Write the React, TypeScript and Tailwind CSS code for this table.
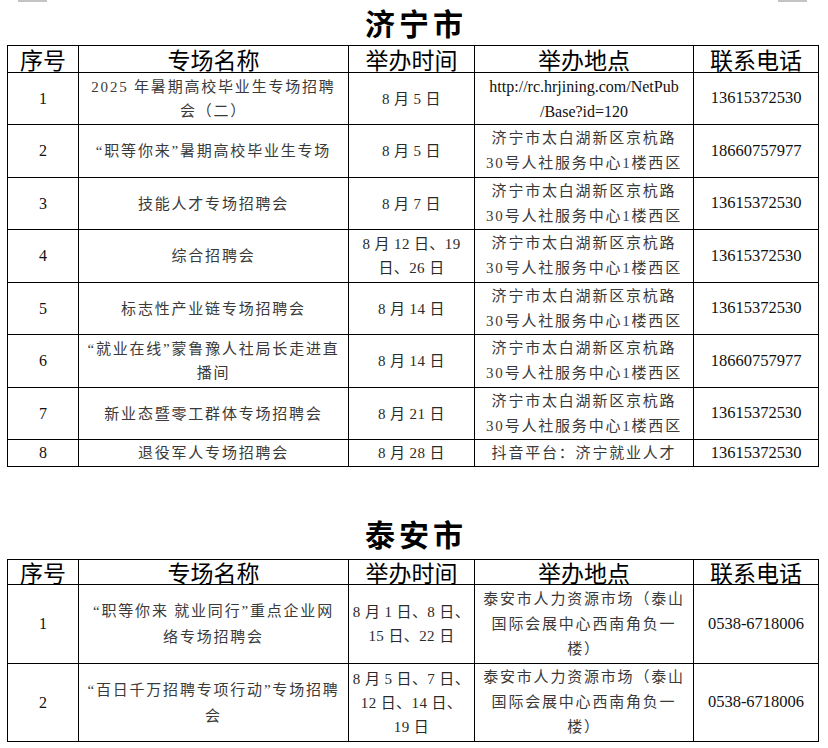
import React from "react";

const serif = { fontFamily: '"Liberation Serif", "Noto Sans CJK SC", serif' };
const sans = { fontFamily: '"Noto Sans CJK SC", "Noto Sans", sans-serif' };

type Row = { no: string; name: string[]; date: string[]; place: string[]; phone: string; h: number };

const JINING_ADDR = ["济宁市太白湖新区京杭路", "30号人社服务中心1楼西区"];

const jining: Row[] = [
  { no: "1", name: ["2025 年暑期高校毕业生专场招聘", "会（二）"], date: ["8 月 5 日"], place: ["http://rc.hrjining.com/NetPub", "/Base?id=120"], phone: "13615372530", h: 52 },
  { no: "2", name: ["“职等你来”暑期高校毕业生专场"], date: ["8 月 5 日"], place: JINING_ADDR, phone: "18660757977", h: 53 },
  { no: "3", name: ["技能人才专场招聘会"], date: ["8 月 7 日"], place: JINING_ADDR, phone: "13615372530", h: 52 },
  { no: "4", name: ["综合招聘会"], date: ["8 月 12 日、19", "日、26 日"], place: JINING_ADDR, phone: "13615372530", h: 53 },
  { no: "5", name: ["标志性产业链专场招聘会"], date: ["8 月 14 日"], place: JINING_ADDR, phone: "13615372530", h: 52 },
  { no: "6", name: ["“就业在线”蒙鲁豫人社局长走进直", "播间"], date: ["8 月 14 日"], place: JINING_ADDR, phone: "18660757977", h: 53 },
  { no: "7", name: ["新业态暨零工群体专场招聘会"], date: ["8 月 21 日"], place: JINING_ADDR, phone: "13615372530", h: 52 },
  { no: "8", name: ["退役军人专场招聘会"], date: ["8 月 28 日"], place: ["抖音平台：济宁就业人才"], phone: "13615372530", h: 27 },
];

const TAIAN_ADDR = ["泰安市人力资源市场（泰山", "国际会展中心西南角负一", "楼）"];

const taian: Row[] = [
  { no: "1", name: ["“职等你来 就业同行”重点企业网", "络专场招聘会"], date: ["8 月 1 日、8 日、", "15 日、22 日"], place: TAIAN_ADDR, phone: "0538-6718006", h: 79 },
  { no: "2", name: ["“百日千万招聘专项行动”专场招聘", "会"], date: ["8 月 5 日、7 日、", "12 日、14 日、", "19 日"], place: TAIAN_ADDR, phone: "0538-6718006", h: 78 },
];

function Lines({ lines, lh }: { lines: string[]; lh: string }) {
  return (
    <>
      {lines.map((l, i) => (
        <div key={i} className={`whitespace-nowrap ${lh}`}>
          {l}
        </div>
      ))}
    </>
  );
}

function Table({ rows, headH }: { rows: Row[]; headH: number }) {
  const th = "border border-black text-center font-normal text-black text-[23px] p-0";
  const td = "border border-black text-center align-middle p-0";
  return (
    <table className="ml-[7px] w-[811px] table-fixed border-collapse" style={serif}>
      <colgroup>
        <col className="w-[71px]" />
        <col className="w-[270px]" />
        <col className="w-[126px]" />
        <col className="w-[219px]" />
        <col className="w-[125px]" />
      </colgroup>
      <thead>
        <tr style={{ height: headH }}>
          {["序号", "专场名称", "举办时间", "举办地点", "联系电话"].map((t) => (
            <th key={t} className={`${th} leading-none`} style={sans}>
              {t}
            </th>
          ))}
        </tr>
      </thead>
      <tbody>
        {rows.map((r) => (
          <tr key={r.no} style={{ height: r.h }}>
            <td className={`${td} text-[16px] text-[#111]`}>{r.no}</td>
            <td className={`${td} text-[15px] tracking-[1.8px] text-[#3a3a3a]`}>
              <Lines lines={r.name} lh={r.name.length > 1 && r.h > 60 ? "leading-[26px]" : "leading-[24px]"} />
            </td>
            <td className={`${td} text-[15px] tracking-[0.4px] text-[#2a2a2a]`}>
              <Lines lines={r.date} lh="leading-[24px]" />
            </td>
            <td
              className={`${td} ${r.place[0].startsWith("http") ? "tracking-normal text-[16px] text-[#111]" : "text-[15px] tracking-[1.8px] text-[#3a3a3a]"}`}
            >
              <Lines lines={r.place} lh={r.h < 30 ? "leading-[22px]" : "leading-[25px]"} />
            </td>
            <td className={`${td} text-[16.5px] text-[#111]`}>{r.phone}</td>
          </tr>
        ))}
      </tbody>
    </table>
  );
}

export default function App() {
  return (
    <div className="relative w-[828px] h-[748px] bg-white overflow-hidden">
      <div className="absolute left-[18px] top-0 w-[29px] h-[2px] bg-[#c4c4c4]" />
      <div className="absolute left-[778px] top-0 w-[29px] h-[2px] bg-[#c4c4c4]" />
      <div className="h-[45px] flex items-start justify-center pl-[4px]">
        <span className="text-[30px] font-bold leading-[44px] tracking-[4px] text-black" style={sans}>
          济宁市
        </span>
      </div>
      <Table rows={jining} headH={27} />
      <div className="mt-[44px] h-[48px] flex items-start justify-center pl-[4px]">
        <span className="text-[30px] font-bold leading-[44px] tracking-[4px] text-black" style={sans}>
          泰安市
        </span>
      </div>
      <Table rows={taian} headH={25} />
    </div>
  );
}
